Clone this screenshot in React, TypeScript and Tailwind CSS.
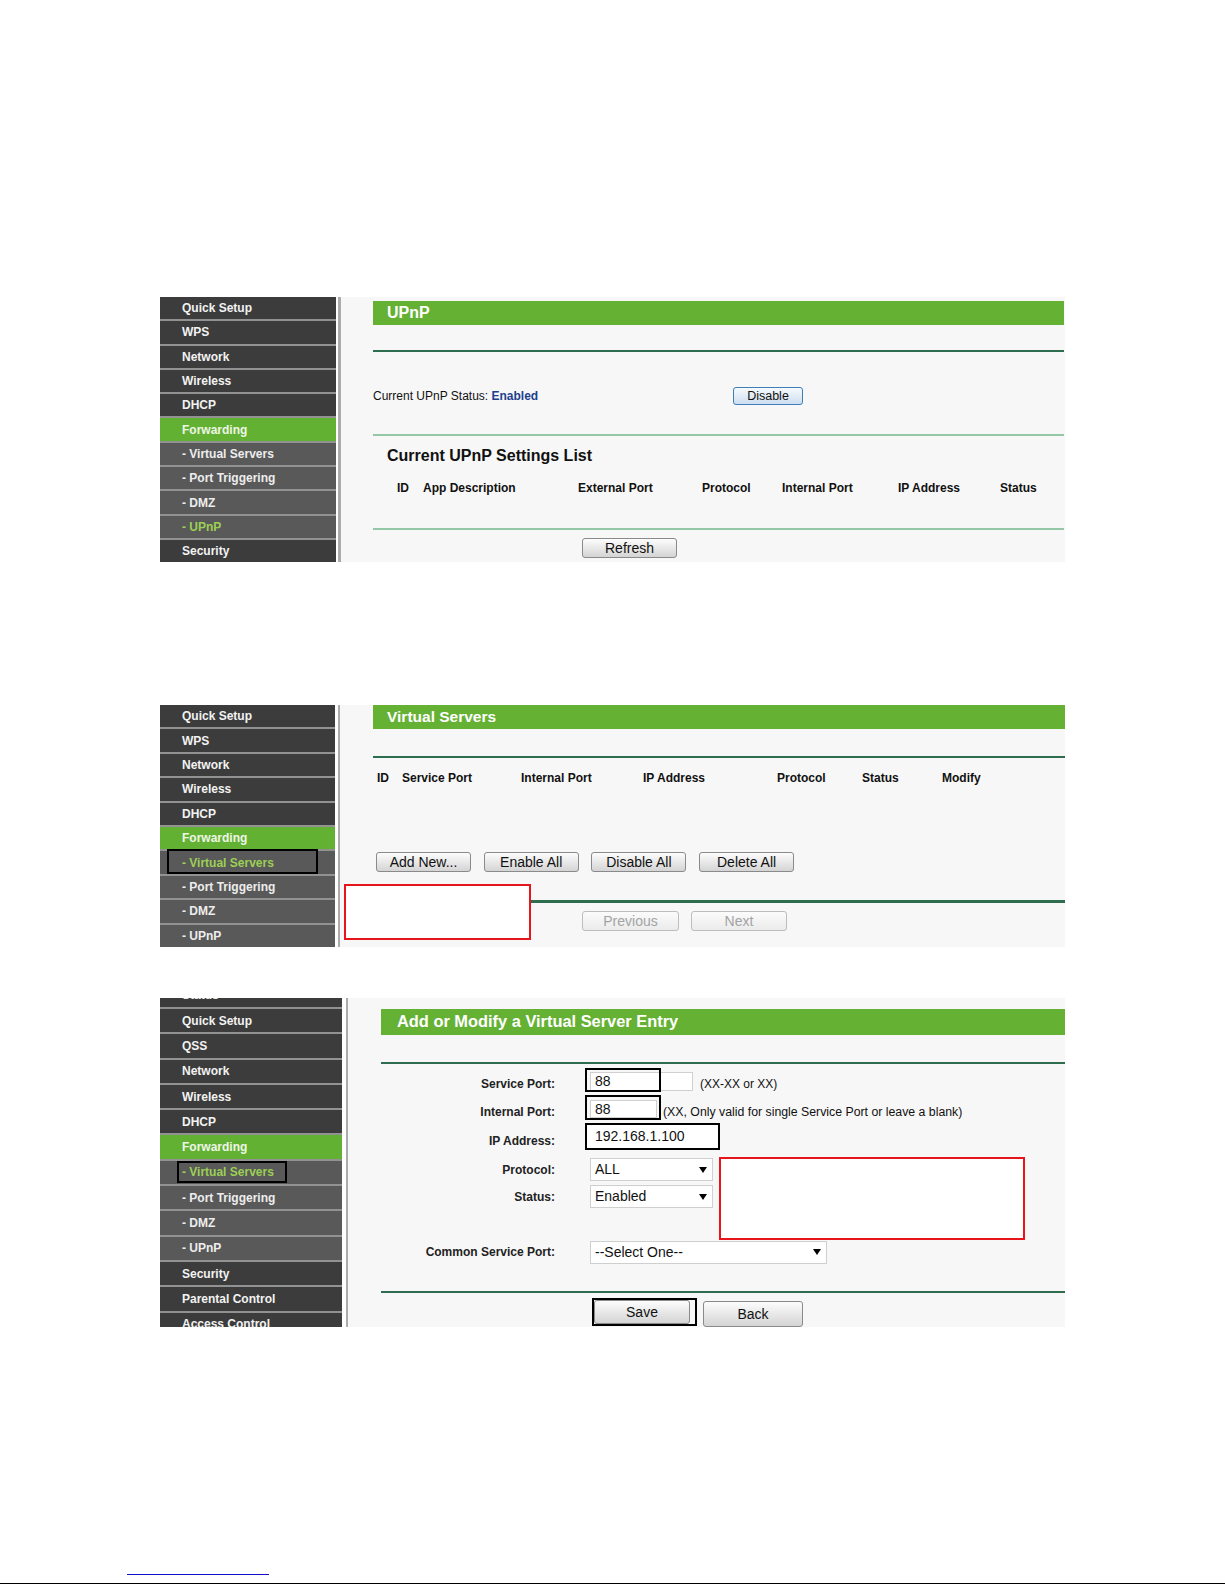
import type { ReactNode } from 'react'

type Side = { t: string; c?: 'main' | 'sub' | 'on' | 'cur'; box?: string }

const P1_SIDE: Side[] = [
  { t: 'Quick Setup' },
  { t: 'WPS' },
  { t: 'Network' },
  { t: 'Wireless' },
  { t: 'DHCP' },
  { t: 'Forwarding', c: 'on' },
  { t: '- Virtual Servers', c: 'sub' },
  { t: '- Port Triggering', c: 'sub' },
  { t: '- DMZ', c: 'sub' },
  { t: '- UPnP', c: 'cur' },
  { t: 'Security' },
]

const P2_SIDE: Side[] = [
  { t: 'Quick Setup' },
  { t: 'WPS' },
  { t: 'Network' },
  { t: 'Wireless' },
  { t: 'DHCP' },
  { t: 'Forwarding', c: 'on' },
  { t: '- Virtual Servers', c: 'cur', box: 'absolute left-[7px] top-[-2px] h-[25px] w-[151px] border-2 border-black' },
  { t: '- Port Triggering', c: 'sub' },
  { t: '- DMZ', c: 'sub' },
  { t: '- UPnP', c: 'sub' },
]

const P3_SIDE: Side[] = [
  { t: 'Quick Setup' },
  { t: 'QSS' },
  { t: 'Network' },
  { t: 'Wireless' },
  { t: 'DHCP' },
  { t: 'Forwarding', c: 'on' },
  { t: '- Virtual Servers', c: 'cur', box: 'absolute left-[17px] top-0 h-[22px] w-[110px] border-2 border-black' },
  { t: '- Port Triggering', c: 'sub' },
  { t: '- DMZ', c: 'sub' },
  { t: '- UPnP', c: 'sub' },
  { t: 'Security' },
  { t: 'Parental Control' },
  { t: 'Access Control' },
]

function SideItem({ item, h }: { item: Side; h: string }) {
  const tone =
    item.c === 'on'
      ? 'bg-[#63b132] text-[#eef6e6]'
      : item.c === 'sub'
        ? 'bg-[#595959] text-[#ededed]'
        : item.c === 'cur'
          ? 'bg-[#595959] text-[#9ccf55]'
          : 'bg-[#3c3c3c] text-[#f2f2f2]'
  return (
    <div className={`relative flex shrink-0 items-center pl-[22px] text-[12px] font-bold ${h} ${tone}`}>
      {item.t}
      {item.box && <div className={item.box} />}
    </div>
  )
}

function Sidebar({ items, w, h, top }: { items: Side[]; w: string; h: string; top?: ReactNode }) {
  return (
    <div className={`flex shrink-0 flex-col gap-[2px] overflow-hidden bg-[#929292] ${w}`}>
      {top}
      {items.map((it) => (
        <SideItem key={it.t} item={it} h={h} />
      ))}
    </div>
  )
}

function Btn({ children, className = '', tone = 'n' }: { children: ReactNode; className?: string; tone?: 'n' | 'blue' | 'off' }) {
  const t =
    tone === 'blue'
      ? 'border-[#3d7fb6] from-[#f6fafd] to-[#cddff0] text-[#111]'
      : tone === 'off'
        ? 'border-[#bdbdbd] from-[#fbfbfb] to-[#ebebeb] text-[#a3a3a3]'
        : 'border-[#8a8a8a] from-[#fdfdfd] to-[#d4d4d4] text-[#111]'
  return (
    <div className={`flex shrink-0 items-center justify-center rounded-[3px] border bg-linear-to-b ${t} ${className}`}>
      {children}
    </div>
  )
}

function Label({ children }: { children: ReactNode }) {
  return <span className="w-[174px] shrink-0 text-right text-[12px] font-bold text-[#222]">{children}</span>
}

function Select({ v, w }: { v: string; w: string }) {
  return (
    <div className={`ml-[35px] flex h-[23px] shrink-0 items-center justify-between border border-[#cfcfcf] bg-white pl-[4px] pr-[5px] text-[14px] ${w}`}>
      <span>{v}</span>
      <span className="h-0 w-0 border-x-[4px] border-t-[6px] border-x-transparent border-t-black" />
    </div>
  )
}

function UpnpPanel() {
  return (
    <div className="ml-[160px] flex h-[265px] w-[905px] overflow-hidden">
      <Sidebar items={P1_SIDE} w="w-[176px]" h="h-[22.3px]" />
      <div className="ml-[2px] w-[3px] bg-[#ababab]" />
      <div className="flex flex-1 flex-col bg-[#f7f7f7] pl-[32px] pr-[1px]">
        <div className="mt-[4px] flex h-[24px] items-center bg-[#65b133] pl-[14px] text-[16px] font-bold text-white">UPnP</div>
        <div className="mt-[25px] h-[2px] bg-[#2f6d50]" />
        <div className="mt-[34px] flex h-[20px] items-center text-[12px]">
          <span className="w-[360px] shrink-0">
            Current UPnP Status: <b className="text-[#1d3f8e]">Enabled</b>
          </span>
          <Btn tone="blue" className="h-[18px] w-[70px] text-[12.5px]">Disable</Btn>
        </div>
        <div className="mt-[28px] h-[2px] bg-[#93c7a5]" />
        <div className="mt-[10px] flex h-[20px] items-center pl-[14px] text-[16px] font-bold">Current UPnP Settings List</div>
        <div className="mt-[14px] flex h-[16px] items-center pl-[24px] text-[12px] font-bold">
          <span className="w-[26px] shrink-0">ID</span>
          <span className="w-[155px] shrink-0">App Description</span>
          <span className="w-[124px] shrink-0">External Port</span>
          <span className="w-[80px] shrink-0">Protocol</span>
          <span className="w-[116px] shrink-0">Internal Port</span>
          <span className="w-[102px] shrink-0">IP Address</span>
          <span>Status</span>
        </div>
        <div className="mt-[32px] h-[2px] bg-[#93c7a5]" />
        <Btn className="ml-[209px] mt-[8px] h-[20px] w-[95px] text-[14px]">Refresh</Btn>
      </div>
    </div>
  )
}

function VirtualServersPanel() {
  return (
    <div className="relative ml-[160px] mt-[143px] flex h-[242px] w-[905px]">
      <Sidebar items={P2_SIDE} w="w-[175px]" h="h-[22.4px]" />
      <div className="ml-[3px] w-[2px] bg-[#ababab]" />
      <div className="flex flex-1 flex-col bg-[#f7f7f7] pl-[33px]">
        <div className="flex h-[24px] items-center bg-[#65b133] pl-[14px] text-[15.5px] font-bold text-white">Virtual Servers</div>
        <div className="mt-[27px] h-[2px] bg-[#2f6d50]" />
        <div className="mt-[12px] flex h-[16px] items-center pl-[4px] text-[12px] font-bold">
          <span className="w-[25px] shrink-0">ID</span>
          <span className="w-[119px] shrink-0">Service Port</span>
          <span className="w-[122px] shrink-0">Internal Port</span>
          <span className="w-[134px] shrink-0">IP Address</span>
          <span className="w-[85px] shrink-0">Protocol</span>
          <span className="w-[80px] shrink-0">Status</span>
          <span>Modify</span>
        </div>
        <div className="mt-[66px] flex h-[20px] gap-[12.7px] pl-[3px] text-[14px]">
          <Btn className="w-[95px]">Add New...</Btn>
          <Btn className="w-[95px]">Enable All</Btn>
          <Btn className="w-[95px]">Disable All</Btn>
          <Btn className="w-[95px]">Delete All</Btn>
        </div>
        <div className="mt-[28px] h-[3px] bg-[#2f6d50]" />
        <div className="mt-[8px] flex h-[20px] gap-[12px] pl-[209px] text-[14px]">
          <Btn tone="off" className="w-[97px]">Previous</Btn>
          <Btn tone="off" className="w-[96px]">Next</Btn>
        </div>
      </div>
      <div className="absolute left-[184px] top-[179px] h-[56px] w-[187px] border-2 border-[#e8141c] bg-white" />
    </div>
  )
}

function EntryPanel() {
  const status = (
    <div className="flex h-[9px] shrink-0 flex-col justify-end overflow-hidden bg-[#3c3c3c]">
      <div className="flex h-[23.3px] shrink-0 items-center pl-[22px] text-[12px] font-bold text-[#f2f2f2]">Status</div>
    </div>
  )
  return (
    <div className="relative ml-[160px] mt-[51px] flex h-[329px] w-[905px] overflow-hidden">
      <Sidebar items={P3_SIDE} w="w-[182px]" h="h-[23.3px]" top={status} />
      <div className="ml-[4px] w-[2px] bg-[#ababab]" />
      <div className="flex flex-1 flex-col bg-[#f7f7f7] pl-[33px]">
        <div className="mt-[11px] flex h-[26px] items-center bg-[#65b133] pl-[16px] text-[16.4px] font-bold text-white">
          Add or Modify a Virtual Server Entry
        </div>
        <div className="mt-[27px] h-[2px] bg-[#2f6d50]" />

        <div className="mt-[6px] flex h-[29px] items-center">
          <Label>Service Port:</Label>
          <div className="relative mb-[4px] ml-[35px] flex h-[19px] w-[103px] shrink-0 items-center border border-[#d0d0d0] bg-white pl-[4px] text-[14px]">
            88
            <div className="absolute left-[-6px] top-[-5px] h-[24px] w-[76px] border-2 border-black" />
          </div>
          <span className="ml-[7px] text-[12px]">(XX-XX or XX)</span>
        </div>

        <div className="flex h-[29px] items-center">
          <Label>Internal Port:</Label>
          <div className="relative mb-[6px] ml-[35px] flex h-[18px] w-[67px] shrink-0 items-center border border-[#d0d0d0] bg-white pl-[4px] text-[14px]">
            88
            <div className="absolute left-[-6px] top-[-6px] h-[25px] w-[76px] border-2 border-black" />
          </div>
          <span className="ml-[6px] text-[12.3px]">(XX, Only valid for single Service Port or leave a blank)</span>
        </div>

        <div className="flex h-[29px] items-center">
          <Label>IP Address:</Label>
          <div className="mb-[8px] ml-[30px] flex h-[27px] w-[135px] shrink-0 items-center border-2 border-black bg-white pl-[8px] text-[14px]">
            192.168.1.100
          </div>
        </div>

        <div className="flex h-[29px] items-center">
          <Label>Protocol:</Label>
          <Select v="ALL" w="w-[123px]" />
        </div>

        <div className="flex h-[26px] items-center">
          <Label>Status:</Label>
          <Select v="Enabled" w="w-[123px]" />
        </div>

        <div className="mt-[31px] flex h-[24px] items-center">
          <Label>Common Service Port:</Label>
          <Select v="--Select One--" w="w-[237px]" />
        </div>

        <div className="mt-[27px] h-[2px] bg-[#2f6d50]" />
        <div className="mt-[5px] flex items-start text-[14px]">
          <div className="ml-[211px] flex h-[28px] w-[105px] shrink-0 border-2 border-black pr-[5px]">
            <Btn className="h-full flex-1">Save</Btn>
          </div>
          <Btn className="ml-[6px] mt-[3px] h-[26px] w-[100px]">Back</Btn>
        </div>
      </div>
      <div className="absolute left-[559px] top-[159px] h-[83px] w-[306px] border-2 border-[#e8141c] bg-white" />
    </div>
  )
}

export default function App() {
  return (
    <div className="relative h-[1585px] w-[1225px] overflow-hidden bg-white font-['Liberation_Sans',Arial,Helvetica,sans-serif] text-[#111]">
      <div className="flex flex-col pt-[297px]">
        <UpnpPanel />
        <VirtualServersPanel />
        <EntryPanel />
        <div className="ml-[127px] mt-[247px] h-[1px] w-[142px] bg-[#1010c8]" />
        <div className="mt-[8px] h-[1px] w-full bg-black" />
      </div>
    </div>
  )
}
